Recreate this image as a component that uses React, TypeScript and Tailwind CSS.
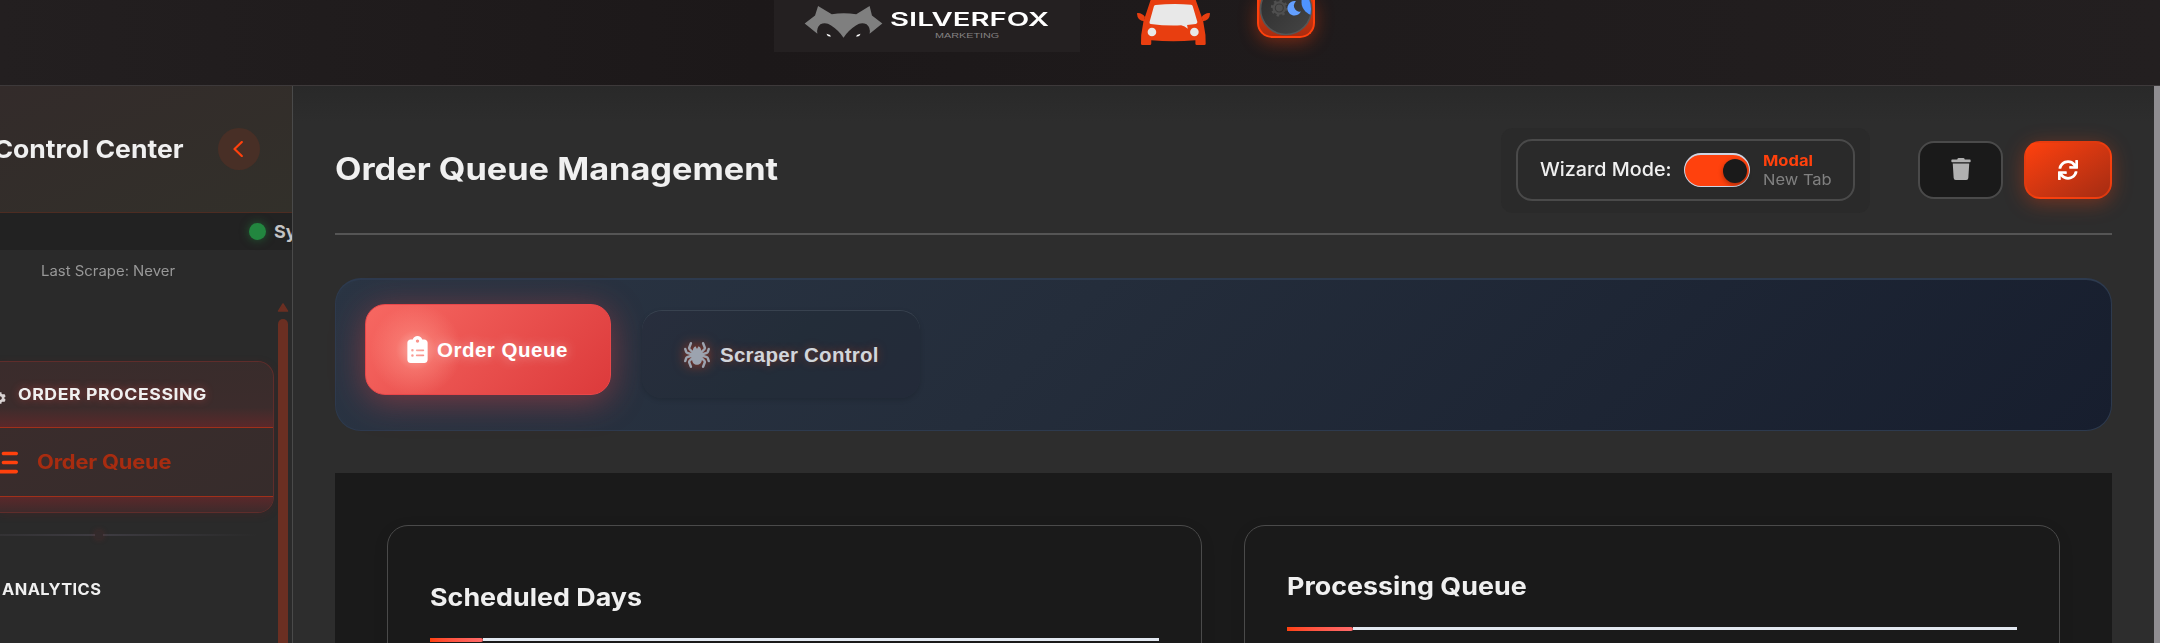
import type { ReactNode } from 'react';
import { FaSync, FaTrash, FaCog } from 'react-icons/fa';
import { FaSpider, FaClipboardList, FaListCheck } from 'react-icons/fa6';

function FoxLogo() {
  return (
    <svg viewBox="130 15 236 100" className="h-[33px] w-[79px]" preserveAspectRatio="none">
      <path
        fill="#7f7f7f"
        d="M172 18 L213 43 Q248 37 286 43 L326 18 L333 47 L364 71 L326 102 Q330 84 317 73 Q300 66 285 77 Q262 92 248 114 Q234 92 211 77 Q196 66 179 73 Q166 84 170 102 L132 71 L163 47 Z"
      />
      <path fill="#ffffff" d="M197 102 L208 106 L210 111 L201 109 Z M299 102 L288 106 L286 111 L295 109 Z" />
    </svg>
  );
}

function CarIcon() {
  return (
    <svg viewBox="21 0 220 138" className="h-[46px] w-[73px]" preserveAspectRatio="none">
      <path
        fill="#e83e10"
        d="M62 0 H198 L214 45 Q222 62 224 85 Q229 105 228 131 Q228 135 224 135 H201 Q197 135 197 131 V121 Q130 127 64 121 V131 Q64 135 60 135 H37 Q33 135 33 131 Q32 105 37 85 Q39 62 47 45 Z"
      />
      <path
        fill="#e83e10"
        d="M21 41 Q20 39 24 39 Q38 40 45 51 L42 64 Q22 61 21 41 Z M241 41 Q242 39 238 39 Q224 40 216 51 L219 64 Q240 61 241 41 Z"
      />
      <path
        fill="#e8e8e8"
        d="M77 15 Q130 9 184 14 Q188 15 189 19 L203 66 Q203 71 198 72 L172 75 L174 86 Q165 78 154 76 Q108 78 62 72 Q57 70 59 65 L72 19 Q74 15 77 15 Z"
      />
      <circle cx="66" cy="96" r="13" fill="#e8e8e8" />
      <circle cx="194" cy="96" r="13" fill="#e8e8e8" />
    </svg>
  );
}

function ThemeToggle() {
  return (
    <div className="h-[38px] w-[58px] rounded-b-[15px] border-2 border-t-0 border-[#ff410d] bg-linear-to-b from-[#e03a0e] to-[#a82c10] shadow-[0_4px_18px_rgba(255,65,13,0.4)]">
      <svg viewBox="2 0 54 36" className="h-[36px] w-[54px]">
        <defs>
          <linearGradient id="dial" x1="0" y1="0" x2="1" y2="1">
            <stop offset="0" stopColor="#2c2c2c" />
            <stop offset="1" stopColor="#454545" />
          </linearGradient>
          <clipPath id="dialClip">
            <circle cx="29" cy="9" r="25" />
          </clipPath>
        </defs>
        <circle cx="29" cy="9" r="25.5" fill="url(#dial)" stroke="#555555" strokeWidth="1.6" />
        <g clipPath="url(#dialClip)">
          <circle cx="22.3" cy="8" r="6.8" fill="#4f4f4f" />
          <circle cx="22.3" cy="8" r="7.2" fill="none" stroke="#4f4f4f" strokeWidth="2.6" strokeDasharray="2.6 3.05" />
          <circle cx="22.3" cy="8" r="4" fill="none" stroke="#393939" strokeWidth="1.1" />
          <path fill="#639fff" d="M39 1.2 A7.2 7.2 0 1 0 44 11.6 A6 6 0 0 1 39 1.2 Z" />
          <circle cx="58" cy="2" r="13.5" fill="#4f93ff" />
        </g>
      </svg>
    </div>
  );
}

function TopBar() {
  return (
    <header className="flex h-[86px] shrink-0 items-start border-b border-[#3d393a] bg-linear-to-r from-[#231f20] via-[#1c1819] via-35% to-[#231f20] pl-[774px]">
      <div className="flex h-[52px] w-[306px] items-start bg-[#242021] pt-[5px] pl-[30px]">
        <FoxLogo />
        <div className="w-[170px] pt-[5px] pl-[7px] whitespace-nowrap">
          <div className="w-[107px] origin-left scale-x-[1.54] text-[19px] leading-[20px] font-semibold tracking-[0px] text-white">
            SILVERFOX
          </div>
          <div className="w-[48px] origin-left translate-x-[45px] scale-x-[1.35] pt-[1px] font-['Liberation_Sans',sans-serif] text-[8px] leading-[9px] text-[#858283]">
            MARKETING
          </div>
        </div>
      </div>
      <div className="ml-[57px]">
        <CarIcon />
      </div>
      <div className="ml-[47px]">
        <ThemeToggle />
      </div>
    </header>
  );
}

function Sidebar() {
  return (
    <aside className="flex w-[293px] shrink-0 flex-col overflow-hidden border-r border-[#4a4a4a] bg-[#2a2a2a] whitespace-nowrap">
      <div className="flex h-[127px] shrink-0 items-center justify-end border-b border-[#4d2c22] bg-linear-to-br from-[#332b2a] to-[#32302a] pr-[32px]">
        <h2 className="origin-right scale-x-[1.083] text-[24.5px] leading-none font-bold text-[#f0f0f0]">Control Center</h2>
        <button className="ml-[35px] flex size-[42px] items-center justify-center rounded-full bg-[#482f26]">
          <svg viewBox="0 0 10 16" className="mt-[-1px] mr-[2px] h-[16px] w-[10px]" fill="none" stroke="#ff410d" strokeWidth="2.2" strokeLinecap="round" strokeLinejoin="round">
            <path d="M8.8 1 L1.5 8 L8.8 15" />
          </svg>
        </button>
      </div>
      <div className="flex h-[37px] shrink-0 items-center bg-[#222222] pl-[249px]">
        <span className="size-[17px] shrink-0 rounded-full bg-[#22863f] shadow-[0_0_10px_rgba(34,134,63,0.6)]" />
        <span className="ml-[8px] text-[18px] font-bold text-[#c4c4c4]">Sy</span>
      </div>
      <div className="h-[53px] shrink-0 pt-[11px] pl-[41px] text-[14px] leading-[20px] text-[#989898]">
        <span className="inline-block origin-left scale-x-[1.065]">Last Scrape: Never</span>
      </div>
      <div className="flex flex-1">
        <nav className="flex w-[274px] flex-col pt-[58px]">
          <section className="flex h-[152px] shrink-0 flex-col overflow-hidden rounded-r-[16px] border border-l-0 border-[#5f2d2b] bg-linear-to-br from-[#3b2c2c] to-[#362c2b] shadow-[0_2px_8px_rgba(120,30,30,0.18)]">
            <div className="flex h-[65px] items-center bg-linear-to-t from-[#5a282a] via-[#3c2c2c] via-30% to-transparent">
              <FaCog className="mt-[7px] ml-[-6px] size-[12px] shrink-0 text-[#d8d2d2]" />
              <span className="mt-px ml-[11.5px] origin-left scale-x-[1.14] text-[15.5px] leading-none font-bold tracking-[0.5px] text-[#f0f0f0] [text-shadow:0_0_8px_rgba(255,80,80,0.45)]">
                ORDER PROCESSING
              </span>
            </div>
            <div className="flex h-[70px] items-center border-y border-[#a0301a]">
              <FaListCheck className="ml-[-11px] size-[29px] shrink-0 text-[#ff410d]" />
              <span className="mt-px ml-[19px] origin-left scale-x-[1.12] text-[19.5px] leading-none font-bold tracking-[-0.15px] text-[#a82c10]">
                Order Queue
              </span>
            </div>
            <div className="flex-1 bg-linear-to-b from-[#5a282a] to-[#3e2a2b]" />
          </section>
          <div className="mt-[21px] flex h-[2px] w-[258px] shrink-0 items-center bg-linear-to-r from-[#333234] via-[#3e3c42] via-38% to-[#2a2a2a]">
            <span className="ml-[95px] size-[8px] shrink-0 rounded-full bg-[#332a2b] shadow-[0_0_6px_rgba(200,50,50,0.25)]" />
          </div>
          <div className="mt-[44px] pl-[2px] text-[15.5px] leading-[20px] font-bold text-[#f0f0f0]">
            <span className="inline-block origin-left scale-x-[1.06] tracking-[0.4px]">ANALYTICS</span>
          </div>
        </nav>
        <div className="flex w-[18px] flex-col items-center">
          <svg viewBox="0 0 12 10" className="h-[9px] w-[12px] shrink-0">
            <path d="M6 1 L11 9 H1 Z" fill="#6b2f22" stroke="#6b2f22" strokeWidth="1.6" strokeLinejoin="round" />
          </svg>
          <div className="mt-[7px] w-[10px] flex-1 rounded-t-full bg-[#6b2f22]" />
        </div>
      </div>
    </aside>
  );
}

function WizardMode() {
  return (
    <div className="flex h-[85px] w-[369px] shrink-0 items-start rounded-[12px] bg-[#2a2a2a] pt-[11px] pl-[15px]">
      <div className="flex h-[62px] w-[339px] items-center rounded-[16px] border-2 border-[#4a4a4a] pl-[22px] whitespace-nowrap">
        <div className="w-[144px]">
          <span className="inline-block origin-left scale-x-[1.068] text-[18.5px] leading-none font-medium text-[#f0f0f0]">
            Wizard Mode:
          </span>
        </div>
        <div className="flex h-[34px] w-[66px] items-center justify-end rounded-full border border-t-2 border-[#cfd4e2] bg-[#ff410d] pr-[2px]">
          <span className="mt-[1px] size-[24px] rounded-full bg-[#1a1a1a] shadow-[0_2px_5px_rgba(0,0,0,0.35)]" />
        </div>
        <div className="ml-[13px] leading-[19.5px]">
          <div className="origin-left scale-x-[1.1] text-[15px] font-bold text-[#ff410d]">Modal</div>
          <div className="origin-left scale-x-[1.1] text-[15px] text-[#808080]">New Tab</div>
        </div>
      </div>
    </div>
  );
}

function TabPanel() {
  return (
    <div className="mt-[43px] flex h-[153px] items-start rounded-[26px] border border-t-2 border-[#2d3a4e] bg-[linear-gradient(135deg,#2a3544_0%,#242d3b_40%,#171e2e_100%)] pt-[24px] pl-[29px] font-['Liberation_Sans',sans-serif] whitespace-nowrap">
      <button className="flex h-[91px] w-[246px] items-center rounded-[20px] border border-[#e8474a] bg-[radial-gradient(circle_at_50px_45px,rgba(255,200,190,0.75)_0,rgba(255,150,138,0.4)_20px,rgba(255,120,110,0)_46px),linear-gradient(135deg,#f76862,#dc3a3b)] pl-[41px] shadow-[0_6px_34px_rgba(239,68,68,0.42)]">
        <FaClipboardList className="h-[27px] w-[21px] text-white" />
        <span className="mt-px ml-[9px] text-[20.5px] font-bold tracking-[0.5px] text-white [text-shadow:0_0_12px_rgba(255,255,255,0.45)]">
          Order Queue
        </span>
      </button>
      <button className="mt-[6px] ml-[31px] flex h-[88px] w-[278px] items-center rounded-[20px] border-t border-[#38424f] bg-[linear-gradient(135deg,#282e3d,#232d39_50%,#232a39)] pl-[42px] shadow-[0_2px_5px_rgba(0,0,0,0.15)]">
        <FaSpider className="size-[26px] text-[#9ca3af] [filter:drop-shadow(0_0_6px_rgba(255,65,13,0.6))]" />
        <span className="mt-px ml-[10px] text-[20.5px] font-bold tracking-[0.25px] text-[#d1d5db] [text-shadow:0_0_10px_rgba(255,65,13,0.35)]">
          Scraper Control
        </span>
      </button>
    </div>
  );
}

function Card({ title, width, head, bar }: { title: ReactNode; width: string; head: string; bar: string }) {
  return (
    <section className={`h-[400px] rounded-[21px] border border-[#4a4a4a] bg-[#1a1a1a] px-[42px] shadow-[0_4px_16px_rgba(0,0,0,0.08)] ${width}`}>
      <div className={head}>
        <h3 className="inline-block origin-left scale-x-[1.096] text-[24.5px] leading-[30px] font-bold whitespace-nowrap text-[#f0f0f0]">
          {title}
        </h3>
      </div>
      <div className="flex items-start">
        <div className={bar} />
        <div className="h-[3px] flex-1 bg-[#e2e8f0]" />
      </div>
    </section>
  );
}

export default function App() {
  return (
    <div className="flex h-[643px] w-full flex-col overflow-hidden bg-[#2d2d2d] font-['Inter',sans-serif]">
      <TopBar />
      <div className="flex min-h-0 flex-1">
        <Sidebar />
        <main className="min-w-0 flex-1 overflow-hidden bg-[linear-gradient(to_bottom,#292929,#2d2d2d_36px)] pr-[42px] pl-[42px]">
          <div className="flex h-[149px] items-start border-b-2 border-[#555555] pt-[42px]">
            <h1 className="mt-[23px] origin-left scale-x-[1.107] text-[31px] leading-[36px] font-bold whitespace-nowrap text-[#f0f0f0]">
              Order Queue Management
            </h1>
            <div className="flex flex-1 items-start justify-end">
              <WizardMode />
              <button className="mt-[13px] ml-[48px] flex h-[58px] w-[85px] items-center justify-center rounded-[16px] border-2 border-[#4a4a4a] bg-[#1a1a1a]">
                <FaTrash className="mt-[-2px] size-[22px] text-[#b0b0b0]" />
              </button>
              <button className="mt-[13px] ml-[21px] flex h-[58px] w-[88px] items-center justify-center rounded-[16px] border-2 border-[#ff410d]/60 bg-linear-to-br from-[#ff410d] to-[#a52c12] shadow-[0_4px_20px_rgba(255,65,13,0.35)]">
                <FaSync className="mt-[-1px] size-[20px] text-white" />
              </button>
            </div>
          </div>
          <TabPanel />
          <div className="mt-[42px] flex gap-[42px] bg-[#1a1a1a] px-[52px] pt-[52px]">
            <Card
              title="Scheduled Days"
              width="w-[815px] shrink-0"
              head="h-[112px] pt-[56px]"
              bar="h-[4px] w-[53px] rounded-r-[2px] bg-linear-to-r from-[#ff410d] to-[#ff6b6b]"
            />
            <Card
              title="Processing Queue"
              width="flex-1"
              head="h-[101px] pt-[45px]"
              bar="h-[4px] w-[66px] rounded-r-[2px] bg-linear-to-r from-[#ff410d] to-[#ff6b6b]"
            />
          </div>
        </main>
        <div className="w-[6px] shrink-0 bg-[#8f8d91]" />
      </div>
    </div>
  );
}
